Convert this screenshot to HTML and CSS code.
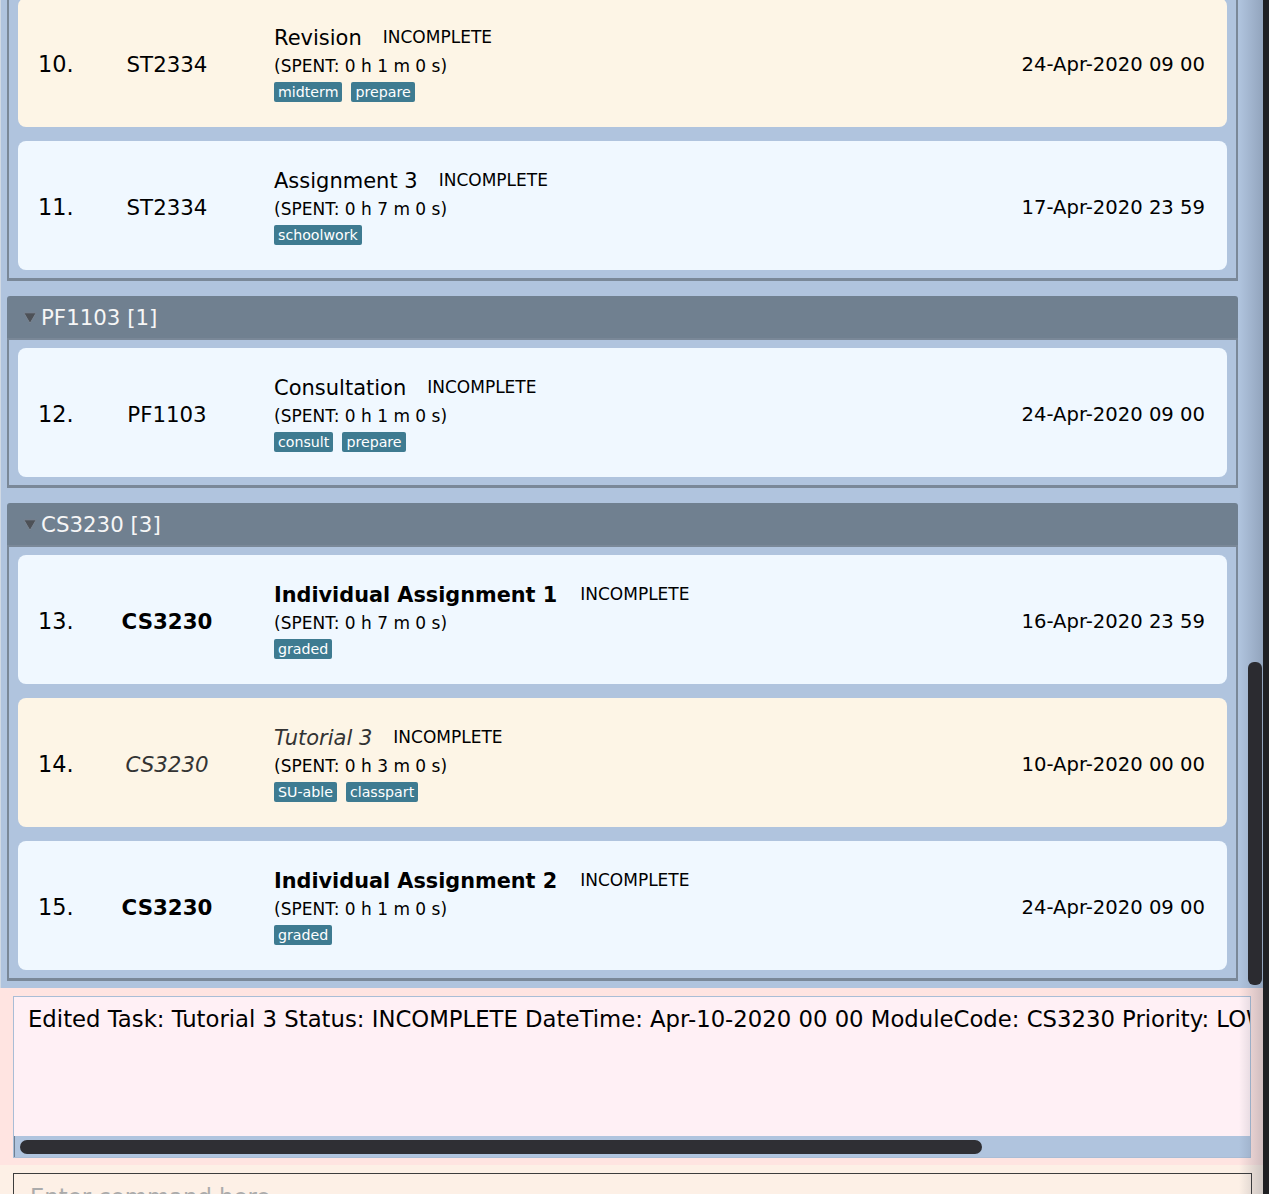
FILE: index.html
```html
<!DOCTYPE html>
<html>
<head>
<meta charset="utf-8">
<title>Task list</title>
<link rel="stylesheet" href="styles.css">
</head>
<body>
<div class="window">
  <div class="app">
    <div class="list-panel">
      <div class="list-viewport">
        <div class="group group-cut">
          <div class="group-body">
            <div class="card cream">
              <div class="num">10.</div>
              <div class="code">ST2334</div>
              <div class="content">
                <div class="title-row"><span class="title">Revision</span><span class="status">INCOMPLETE</span></div>
                <div class="spent">(SPENT: 0 h 1 m 0 s)</div>
                <div class="tags"><span class="tag">midterm</span><span class="tag">prepare</span></div>
              </div>
              <div class="date">24-Apr-2020 09 00</div>
            </div>
            <div class="card blue">
              <div class="num">11.</div>
              <div class="code">ST2334</div>
              <div class="content">
                <div class="title-row"><span class="title">Assignment 3</span><span class="status">INCOMPLETE</span></div>
                <div class="spent">(SPENT: 0 h 7 m 0 s)</div>
                <div class="tags"><span class="tag">schoolwork</span></div>
              </div>
              <div class="date">17-Apr-2020 23 59</div>
            </div>
          </div>
        </div>

        <div class="group">
          <div class="group-header">
            <svg class="arrow" width="14" height="12" viewBox="0 0 14 12"><polygon points="0.8,0.8 13.2,0.8 7,11.4" fill="#4d5157" stroke="#7a8593" stroke-width="1"/></svg>
            <span>PF1103 [1]</span>
          </div>
          <div class="group-body">
            <div class="card blue">
              <div class="num">12.</div>
              <div class="code">PF1103</div>
              <div class="content">
                <div class="title-row"><span class="title">Consultation</span><span class="status">INCOMPLETE</span></div>
                <div class="spent">(SPENT: 0 h 1 m 0 s)</div>
                <div class="tags"><span class="tag">consult</span><span class="tag">prepare</span></div>
              </div>
              <div class="date">24-Apr-2020 09 00</div>
            </div>
          </div>
        </div>

        <div class="group">
          <div class="group-header">
            <svg class="arrow" width="14" height="12" viewBox="0 0 14 12"><polygon points="0.8,0.8 13.2,0.8 7,11.4" fill="#4d5157" stroke="#7a8593" stroke-width="1"/></svg>
            <span>CS3230 [3]</span>
          </div>
          <div class="group-body">
            <div class="card blue">
              <div class="num">13.</div>
              <div class="code bold">CS3230</div>
              <div class="content">
                <div class="title-row"><span class="title bold">Individual Assignment 1</span><span class="status">INCOMPLETE</span></div>
                <div class="spent">(SPENT: 0 h 7 m 0 s)</div>
                <div class="tags"><span class="tag">graded</span></div>
              </div>
              <div class="date">16-Apr-2020 23 59</div>
            </div>
            <div class="card cream">
              <div class="num">14.</div>
              <div class="code italic">CS3230</div>
              <div class="content">
                <div class="title-row"><span class="title italic">Tutorial 3</span><span class="status">INCOMPLETE</span></div>
                <div class="spent">(SPENT: 0 h 3 m 0 s)</div>
                <div class="tags"><span class="tag">SU-able</span><span class="tag">classpart</span></div>
              </div>
              <div class="date">10-Apr-2020 00 00</div>
            </div>
            <div class="card blue">
              <div class="num">15.</div>
              <div class="code bold">CS3230</div>
              <div class="content">
                <div class="title-row"><span class="title bold">Individual Assignment 2</span><span class="status">INCOMPLETE</span></div>
                <div class="spent">(SPENT: 0 h 1 m 0 s)</div>
                <div class="tags"><span class="tag">graded</span></div>
              </div>
              <div class="date">24-Apr-2020 09 00</div>
            </div>
          </div>
        </div>
      </div>
      <div class="vscroll"><div class="vthumb"></div></div>
    </div>

    <div class="result-panel">
      <div class="result-box">
        <div class="result-text">Edited Task: Tutorial 3 Status: INCOMPLETE DateTime: Apr-10-2020 00 00 ModuleCode: CS3230 Priority: LOW</div>
        <div class="hscroll"><div class="hthumb"></div></div>
      </div>
    </div>

    <div class="command-panel">
      <div class="command-box"><span class="placeholder">Enter command here</span></div>
    </div>

    <div class="edge-shade"></div>
  </div>
  <div class="edge-dark"></div>
</div>
</body>
</html>
```

FILE: styles.css
```css
* { box-sizing: border-box; }
html, body { margin: 0; padding: 0; }
body {
  width: 1269px;
  height: 1194px;
  overflow: hidden;
  font-family: "DejaVu Sans", "Noto Sans", sans-serif;
  background: #1f2023;
  color: #000;
}
.window { display: flex; width: 1269px; height: 1194px; }
.app {
  position: relative;
  width: 1263px;
  height: 1194px;
  display: flex;
  flex-direction: column;
  overflow: hidden;
}
.edge-dark { width: 6px; background: #1f2023; }

/* list */
.list-panel {
  height: 988px;
  flex: none;
  display: flex;
  background: #b0c4de;
  border-left: 1px solid #d0d9e4;
}
.list-viewport {
  flex: 1;
  overflow: hidden;
  padding-left: 6px;
  padding-right: 7px;
}
.group { margin-bottom: 15px; }
.group-cut { margin-top: -12px; }
.group-header {
  height: 42px;
  background: #708090;
  border-radius: 3px 3px 0 0;
  display: flex;
  align-items: center;
  padding-left: 16px;
  gap: 4px;
  color: #f6f6f6;
  font-size: 21.33px;
}
.arrow { display: block; margin-top: 1px; }
.group-body {
  border: 2px solid #7a8898;
  border-bottom-width: 3px;
  padding: 8px 9px;
  display: flex;
  flex-direction: column;
  gap: 14px;
}
.card {
  height: 129px;
  border-radius: 8px;
  display: grid;
  grid-template-columns: 69px 120px 1fr auto;
  align-items: center;
  padding: 0 22px 0 20px;
}
.card.cream { background: #fdf5e6; }
.card.blue { background: #f0f8ff; }
.num { font-size: 22.4px; margin-top: 3px; }
.code { font-size: 21.33px; text-align: center; margin-top: 3px; }
.date { font-size: 19.6px; margin-top: 3px; }
.bold { font-weight: bold; }
.title.bold { font-size: 20.8px; }
.title.bold + .status { margin-left: 2px; }
.italic { font-style: italic; color: #333; }
.content { margin-left: 47px; display: flex; flex-direction: column; }
.title-row { height: 28px; display: flex; align-items: center; gap: 21px; }
.title { font-size: 21px; }
.status { font-size: 17px; margin-top: -2px; }
.spent { height: 28px; line-height: 28px; font-size: 17px; }
.tags { margin-top: 2px; display: flex; gap: 9px; }
.tag {
  height: 20px;
  line-height: 20px;
  padding: 0 4px;
  font-size: 14.2px;
  background: #3e7b91;
  color: #fff;
  border-radius: 2px;
}
.vscroll {
  width: 18px;
  flex: none;
  padding: 662px 1px 0 3px;
  position: relative;
  z-index: 2;
}
.vthumb {
  width: 14px;
  height: 323px;
  background: #2b2b30;
  border-radius: 6px;
}

/* result */
.result-panel {
  height: 177px;
  flex: none;
  background: #ffe4e1;
  padding: 8px 12px 7px 13px;
}
.result-box {
  height: 100%;
  border: 1px solid #a9bdd6;
  background: #fff0f5;
  display: flex;
  flex-direction: column;
}
.result-text {
  flex: 1;
  padding: 9px 0 0 14px;
  font-size: 22.75px;
  line-height: 27px;
  white-space: nowrap;
  overflow: hidden;
}
.hscroll {
  height: 21px;
  flex: none;
  background: #b0c4de;
  border-left: 1px solid #6f7f92;
  padding: 4px 0 0 5px;
}
.hthumb {
  width: 962px;
  height: 14px;
  background: #2f2f34;
  border-radius: 7px;
}

/* command */
.command-panel {
  flex: 1;
  background: #fdf0e6;
  padding: 8px 11px 0 13px;
}
.command-box {
  height: 48px;
  border: 1px solid #3d3d3d;
  padding: 10px 0 0 16px;
  font-size: 22.75px;
  line-height: 27px;
}
.placeholder { color: #ababab; }

.edge-shade {
  position: absolute;
  top: 0;
  right: 0;
  bottom: 0;
  width: 24px;
  background: linear-gradient(to right, rgba(40, 50, 70, 0), rgba(40, 50, 70, 0.22));
  pointer-events: none;
}
```
